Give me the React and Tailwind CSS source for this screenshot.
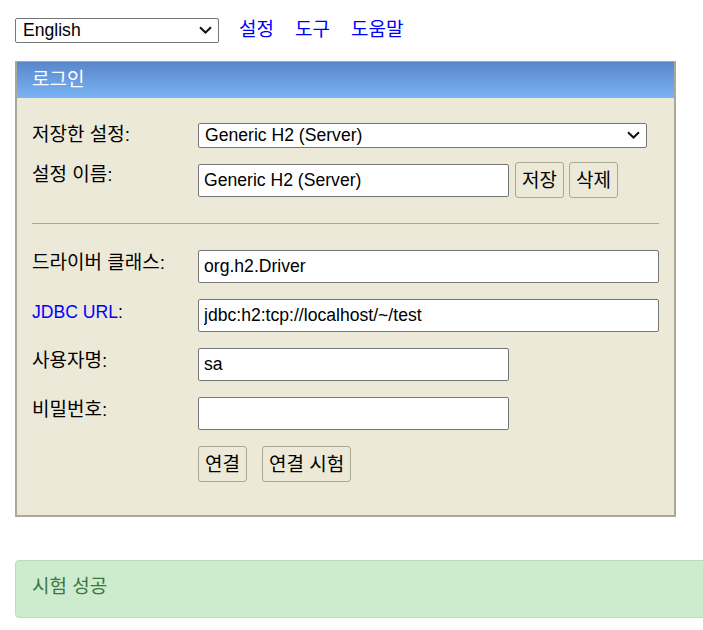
import React from "react";

const font = "font-['Liberation_Sans','Noto_Sans_CJK_KR',sans-serif]";

function Chevron() {
  return (
    <svg
      className="absolute right-[7px] top-1/2 -translate-y-1/2 pointer-events-none"
      width="13"
      height="8"
      viewBox="0 0 13 8"
      fill="none"
    >
      <path d="M1 1.2 L6.5 6.5 L12 1.2" stroke="#111" strokeWidth="2" />
    </svg>
  );
}

function Select({ width, pad, children, value }) {
  return (
    <div className={`relative ${width} h-[25px]`}>
      <select
        defaultValue={value}
        className={`appearance-none w-full h-full border border-[#767676] rounded-[2px] bg-white ${pad} text-black leading-[23px] outline-none`}
      >
        {children}
      </select>
      <Chevron />
    </div>
  );
}

function Field({ label, children, blue }) {
  return (
    <div className="flex items-start">
      <div className="w-[166px] shrink-0 leading-[22px] pt-[2px]">
        {blue ? (
          <>
            <span className="text-[#0000ff]">{label}</span>:
          </>
        ) : (
          <span className="text-[19px]">{label}</span>
        )}
      </div>
      {children}
    </div>
  );
}

function TextBox({ value, wide }) {
  return (
    <input
      type="text"
      defaultValue={value}
      className={`h-[33px] ${wide ? "w-[461px]" : "w-[311px]"} border border-[#767676] rounded-[2px] bg-white px-[5px] text-black outline-none`}
    />
  );
}

function Btn({ children }) {
  return (
    <button className="h-[36px] px-[6px] border border-[#aba795] rounded-[3px] bg-[#ece9d8] text-black text-[19px] leading-none">
      {children}
    </button>
  );
}

export default function App() {
  return (
    <div className={`w-full overflow-hidden bg-white text-[17.6px] text-black ${font}`}>
      {/* top bar */}
      <div className="flex items-center h-[25px] mt-[17px] pl-[15px]">
        <Select width="w-[204px]" pad="pl-[7px]" value="en">
          <option value="en">English</option>
          <option value="ko">한국어</option>
        </Select>
        <div className="flex gap-[21px] ml-[20px] text-[19px] leading-[25px] text-[#0000ff]">
          <a href="#">설정</a>
          <a href="#">도구</a>
          <a href="#">도움말</a>
        </div>
      </div>

      {/* login panel */}
      <div className="ml-[15px] mt-[19px] w-[661px] border-t border-x-2 border-b-2 border-[#aca899] bg-[#ece9d8]">
        <div className="h-[36px] flex items-center pl-[15px] bg-linear-to-b from-[#5a87cc] to-[#79b4f4] text-white text-[19px]">
          로그인
        </div>

        <div className="pl-[15px] pr-[15px] pt-[24px] pb-[33px] flex flex-col">
          <Field label="저장한 설정:">
            <Select width="w-[449px]" pad="pl-[6px]" value="gs">
              <option value="gs">Generic H2 (Server)</option>
              <option value="ge">Generic H2 (Embedded)</option>
            </Select>
          </Field>

          <div className="mt-[15px]">
            <Field label="설정 이름:">
              <div className="flex items-center">
                <TextBox value="Generic H2 (Server)" />
                <div className="flex gap-[5px] ml-[6px]">
                  <Btn>저장</Btn>
                  <Btn>삭제</Btn>
                </div>
              </div>
            </Field>
          </div>

          <div className="mt-[25px] border-t border-[#aca899]" />

          <div className="mt-[26px] flex flex-col gap-[16px]">
            <Field label="드라이버 클래스:">
              <TextBox value="org.h2.Driver" wide />
            </Field>
            <Field label="JDBC URL" blue>
              <TextBox value="jdbc:h2:tcp://localhost/~/test" wide />
            </Field>
            <Field label="사용자명:">
              <TextBox value="sa" />
            </Field>
            <Field label="비밀번호:">
              <TextBox value="" />
            </Field>
            <div className="flex">
              <div className="w-[166px] shrink-0" />
              <div className="flex gap-[15px]">
                <Btn>연결</Btn>
                <Btn>연결 시험</Btn>
              </div>
            </div>
          </div>
        </div>
      </div>

      {/* result */}
      <div className="ml-[15px] mt-[43px] mb-[12px] w-[720px] h-[58px] flex items-center pl-[16px] pb-[3px] border border-[#b9ddb7] rounded-[4px] bg-[#cdebcd] text-[19px] text-[#3c763d]">
        시험 성공
      </div>
    </div>
  );
}
